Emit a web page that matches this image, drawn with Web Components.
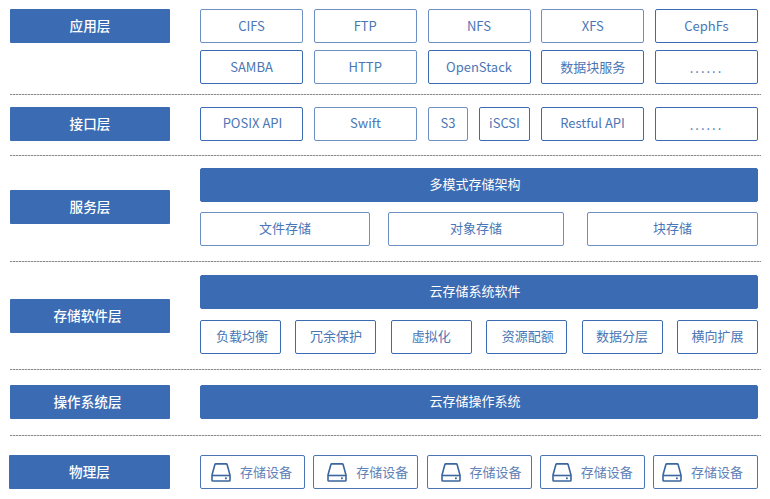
<!DOCTYPE html>
<html><head><meta charset="utf-8">
<style>
html,body{margin:0;padding:0;background:#fff}
body{font-family:"Noto Sans CJK SC","Noto Sans",sans-serif;width:770px;height:499px;overflow:hidden}
</style></head><body>
<arch-diagram>
<arch-layer label="应用层" pt="9" pb="10" gap="7" top style="--tb:2px">
  <cell-row><arch-box w="103" soft>CIFS</arch-box><arch-box w="103" soft>FTP</arch-box><arch-box w="103" soft>NFS</arch-box><arch-box w="103" soft>XFS</arch-box><arch-box w="103">CephFs</arch-box></cell-row>
  <cell-row><arch-box w="103">SAMBA</arch-box><arch-box w="103" soft>HTTP</arch-box><arch-box w="103">OpenStack</arch-box><arch-box w="103">数据块服务</arch-box><arch-box w="103" dots>......</arch-box></cell-row>
</arch-layer>
<arch-layer label="接口层" pt="12" pb="14" style="--tb:4px">
  <cell-row><arch-box w="103" dx="2">POSIX API</arch-box><arch-box w="103" soft>Swift</arch-box><arch-box w="40" soft>S3</arch-box><arch-box w="51">iSCSI</arch-box><arch-box w="103">Restful API</arch-box><arch-box w="103" dots>......</arch-box></cell-row>
</arch-layer>
<arch-layer label="服务层" pt="12" pb="15" gap="10" style="--tb:4px">
  <arch-box solid>多模式存储架构</arch-box>
  <cell-row class="free"><arch-box w="170" soft>文件存储</arch-box><arch-box w="176" ml="18" soft>对象存储</arch-box><arch-box w="171" ml="23" soft>块存储</arch-box></cell-row>
</arch-layer>
<arch-layer label="存储软件层" pt="13" pb="15" gap="11" shift="3" inset="5" style="--tb:4px">
  <arch-box solid>云存储系统软件</arch-box>
  <cell-row><arch-box w="81" dx="3">负载均衡</arch-box><arch-box w="81">冗余保护</arch-box><arch-box w="81">虚拟化</arch-box><arch-box w="81" dx="2">资源配额</arch-box><arch-box w="81">数据分层</arch-box><arch-box w="81">横向扩展</arch-box></cell-row>
</arch-layer>
<arch-layer label="操作系统层" pt="15" pb="16" inset="5" style="--tb:4px">
  <arch-box solid>云存储操作系统</arch-box>
</arch-layer>
<arch-layer label="物理层" pt="19" pb="0" last>
  <cell-row><disk-box pad="10">存储设备</disk-box><disk-box pad="13">存储设备</disk-box><disk-box pad="13">存储设备</disk-box><disk-box pad="11">存储设备</disk-box><disk-box pad="8">存储设备</disk-box></cell-row>
</arch-layer>
</arch-diagram>
<script>
class ArchDiagram extends HTMLElement{constructor(){super();this.attachShadow({mode:'open'}).innerHTML=`<style>:host{display:flex;flex-direction:column;width:770px}</style><slot></slot>`}}
class ArchLayer extends HTMLElement{constructor(){super();const s=this.attachShadow({mode:'open'});
const a=n=>this.getAttribute(n),pt=a('pt'),pb=a('pb'),last=this.hasAttribute('last');
s.innerHTML=`<style>
:host{display:block;width:751px;margin-left:10px;padding-top:${pt}px}
.wrap{display:grid;grid-template-columns:160px 558px;column-gap:30px;align-items:center}
.label{box-sizing:border-box;height:34px;padding-bottom:3px;padding-right:${a('inset')||0}px;background:#3a6bb3;color:#fff;font-size:13.6px;font-weight:500;display:flex;align-items:center;justify-content:center;border-radius:1px;margin-left:${last?-1:0}px;margin-top:${a('shift')||0}px;${this.hasAttribute('top')?'align-self:start;':''}}
.content{display:flex;flex-direction:column;gap:${a('gap')||0}px}
.rule{height:1px;margin-top:${pb}px;background:repeating-linear-gradient(90deg,#8a8a8a 0 2px,#d0d0d0 2px 3px);display:${last?'none':'block'}}
</style><div class="wrap"><div class="label">${a('label')}</div><div class="content"><slot></slot></div></div><div class="rule"></div>`}}
class CellRow extends HTMLElement{constructor(){super();this.attachShadow({mode:'open'}).innerHTML=`<style>:host{display:flex;justify-content:space-between;width:558px}</style><slot></slot>`}}
class ArchBox extends HTMLElement{constructor(){super();const w=this.getAttribute('w'),ml=this.getAttribute('ml')||0,dx=this.getAttribute('dx')||0,solid=this.hasAttribute('solid'),soft=this.hasAttribute('soft'),dots=this.hasAttribute('dots');this.attachShadow({mode:'open'}).innerHTML=`<style>
:host{display:flex;align-items:center;justify-content:center;box-sizing:border-box;height:34px;${w?`width:${w}px;flex:none;margin-left:${ml}px;`:'width:558px;'}
border:1px solid ${soft?'#6c90c4':'#3a6bb3'};border-radius:2px;font-size:13px;
padding-bottom:${dots?'0':'var(--tb,2px)'};padding-left:${dx}px;
${solid?'padding-right:8px;':''}${dots?'letter-spacing:2px;':''}
background:${solid?'#3a6bb3':'#fff'};color:${solid?'#fff':'#4a76b5'}}
</style><slot></slot>`}}
class DiskBox extends HTMLElement{constructor(){super();const p=this.getAttribute('pad')||10;this.attachShadow({mode:'open'}).innerHTML=`<style>
:host{display:flex;align-items:center;box-sizing:border-box;width:105px;height:34px;flex:none;border:1px solid #4a76b5;border-radius:2px;font-size:13px;color:#5f83b8;background:#fff;padding-left:${p}px;gap:9px}
svg{display:block;flex:none}
span{padding-bottom:2px}
</style><svg width="20" height="19" viewBox="0 0 20 19" fill="none" stroke="#3a659f" stroke-width="1.6"><path d="M1 12 3.9 1.6a1 1 0 0 1 .9-.7H15.2a1 1 0 0 1 .9.7L19 12V17.2a.8.8 0 0 1-.8.8H1.8a.8.8 0 0 1-.8-.8Z"/><path d="M1 12.5H19"/><rect x="14" y="14.4" width="1.8" height="1.8" fill="#3a659f" stroke="none"/></svg><span><slot></slot></span>`}}
customElements.define('arch-diagram',ArchDiagram);customElements.define('arch-layer',ArchLayer);customElements.define('cell-row',CellRow);customElements.define('arch-box',ArchBox);customElements.define('disk-box',DiskBox);
</script>
</body></html>
